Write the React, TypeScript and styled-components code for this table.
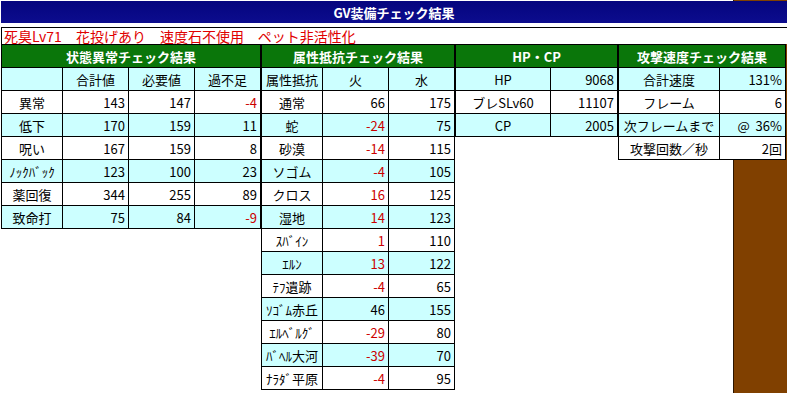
import React from 'react'
import styled, { createGlobalStyle } from 'styled-components'

type Tone = 'plain' | 'tint'

const GlobalStyle = createGlobalStyle`
  html, body {
    margin: 0;
    padding: 0;
    background: #fff;
  }
  body {
    font-family: 'Noto Sans CJK JP', 'Noto Sans', sans-serif;
    font-size: 13px;
    color: #000;
  }
`

const Page = styled.div`
  min-height: 100vh;
  box-sizing: border-box;
  padding: 1px 0 0 1px;
  background: linear-gradient(
    to right,
    #fff 733px,
    #2b1500 733px,
    #2b1500 734px,
    #804000 734px
  );
`

const Masthead = styled.div`
  background: #fff;
`

const TitleBar = styled.div`
  height: 22px;
  background: linear-gradient(#05057e, #0c0c8e);
  color: #fff;
  font-weight: bold;
  font-size: 13px;
  display: flex;
  align-items: center;
  justify-content: center;
  margin-bottom: 4px;
`

const NotesRow = styled.div`
  height: 16px;
  width: 784px;
  border: 1px solid #000;
  border-bottom: none;
  color: #e00000;
  font-size: 14px;
  line-height: 16px;
  padding-left: 2px;
  white-space: pre;
  display: flex;
  align-items: center;
`

const Boards = styled.div`
  display: flex;
  align-items: flex-start;
`

const Sheet = styled.div<{ $cols: string }>`
  display: grid;
  grid-template-columns: ${({ $cols }) => $cols};
  grid-auto-rows: 22px;
  gap: 1px;
  background: #000;
  border: 1px solid #000;
`

const HeadCell = styled.div`
  grid-column: 1 / -1;
  background: #0a760a;
  color: #fff;
  font-weight: bold;
  display: flex;
  align-items: center;
  justify-content: center;
`

const Cell = styled.div<{ $tone?: Tone; $num?: boolean; $warn?: boolean }>`
  background: ${({ $tone }) => ($tone === 'tint' ? '#ccffff' : '#fff')};
  color: ${({ $warn }) => ($warn ? '#cc0000' : '#000')};
  display: flex;
  align-items: center;
  justify-content: ${({ $num }) => ($num ? 'flex-end' : 'center')};
  padding: ${({ $num }) => ($num ? '0 3px 0 0' : '0')};
  white-space: pre;
  overflow: hidden;
`

const ailments: [string, number, number][] = [
  ['異常', 143, 147],
  ['低下', 170, 159],
  ['呪い', 167, 159],
  ['ﾉｯｸﾊﾞｯｸ', 123, 100],
  ['薬回復', 344, 255],
  ['致命打', 75, 84],
]

const elements: [string, number, number][] = [
  ['通常', 66, 175],
  ['蛇', -24, 75],
  ['砂漠', -14, 115],
  ['ソゴム', -4, 105],
  ['クロス', 16, 125],
  ['湿地', 14, 123],
  ['ｽﾊﾞｲﾝ', 1, 110],
  ['ｴﾙﾝ', 13, 122],
  ['ﾃﾌ遺跡', -4, 65],
  ['ｿｺﾞﾑ赤丘', 46, 155],
  ['ｴﾙﾍﾞﾙｸﾞ', -29, 80],
  ['ﾊﾞﾍﾙ大河', -39, 70],
  ['ﾅﾗﾀﾞ平原', -4, 95],
]

const vitals: [string, string][] = [
  ['HP', '9068'],
  ['ブレSLv60', '11107'],
  ['CP', '2005'],
]

const speed: [string, string][] = [
  ['合計速度', '131%'],
  ['フレーム', '6'],
  ['次フレームまで', '@  36%'],
  ['攻撃回数／秒', '2回'],
]

// first data row is white, then alternating
const rowTone = (i: number): Tone => (i % 2 === 0 ? 'plain' : 'tint')

const App: React.FC = () => {
  return (
    <Page>
      <GlobalStyle />
      <Masthead>
        <TitleBar>GV装備チェック結果</TitleBar>
        <NotesRow>死臭Lv71　花投げあり　速度石不使用　ペット非活性化</NotesRow>
      </Masthead>
      <Boards>
        <Sheet $cols="60px 65px 65px 65px">
          <HeadCell>状態異常チェック結果</HeadCell>
          <Cell $tone="tint" />
          <Cell $tone="tint">合計値</Cell>
          <Cell $tone="tint">必要値</Cell>
          <Cell $tone="tint">過不足</Cell>
          {ailments.map(([name, total, need], i) => {
            const diff = total - need
            return (
              <React.Fragment key={name}>
                <Cell $tone={rowTone(i)}>{name}</Cell>
                <Cell $tone={rowTone(i)} $num>{total}</Cell>
                <Cell $tone={rowTone(i)} $num>{need}</Cell>
                <Cell $tone={rowTone(i)} $num $warn={diff < 0}>{diff}</Cell>
              </React.Fragment>
            )
          })}
        </Sheet>
        <Sheet $cols="60px 65px 65px">
          <HeadCell>属性抵抗チェック結果</HeadCell>
          <Cell $tone="tint">属性抵抗</Cell>
          <Cell $tone="tint">火</Cell>
          <Cell $tone="tint">水</Cell>
          {elements.map(([name, fire, water], i) => (
            <React.Fragment key={name}>
              <Cell $tone={rowTone(i)}>{name}</Cell>
              <Cell $tone={rowTone(i)} $num $warn={fire < 20}>{fire}</Cell>
              <Cell $tone={rowTone(i)} $num>{water}</Cell>
            </React.Fragment>
          ))}
        </Sheet>
        <Sheet $cols="94px 66px">
          <HeadCell>HP・CP</HeadCell>
          {vitals.map(([name, value], i) => (
            <React.Fragment key={name}>
              <Cell $tone={rowTone(i + 1)}>{name}</Cell>
              <Cell $tone={rowTone(i + 1)} $num>{value}</Cell>
            </React.Fragment>
          ))}
        </Sheet>
        <Sheet $cols="100px 65px">
          <HeadCell>攻撃速度チェック結果</HeadCell>
          {speed.map(([name, value], i) => (
            <React.Fragment key={name}>
              <Cell $tone={rowTone(i + 1)}>{name}</Cell>
              <Cell $tone={rowTone(i + 1)} $num>{value}</Cell>
            </React.Fragment>
          ))}
        </Sheet>
      </Boards>
    </Page>
  )
}

export default App
